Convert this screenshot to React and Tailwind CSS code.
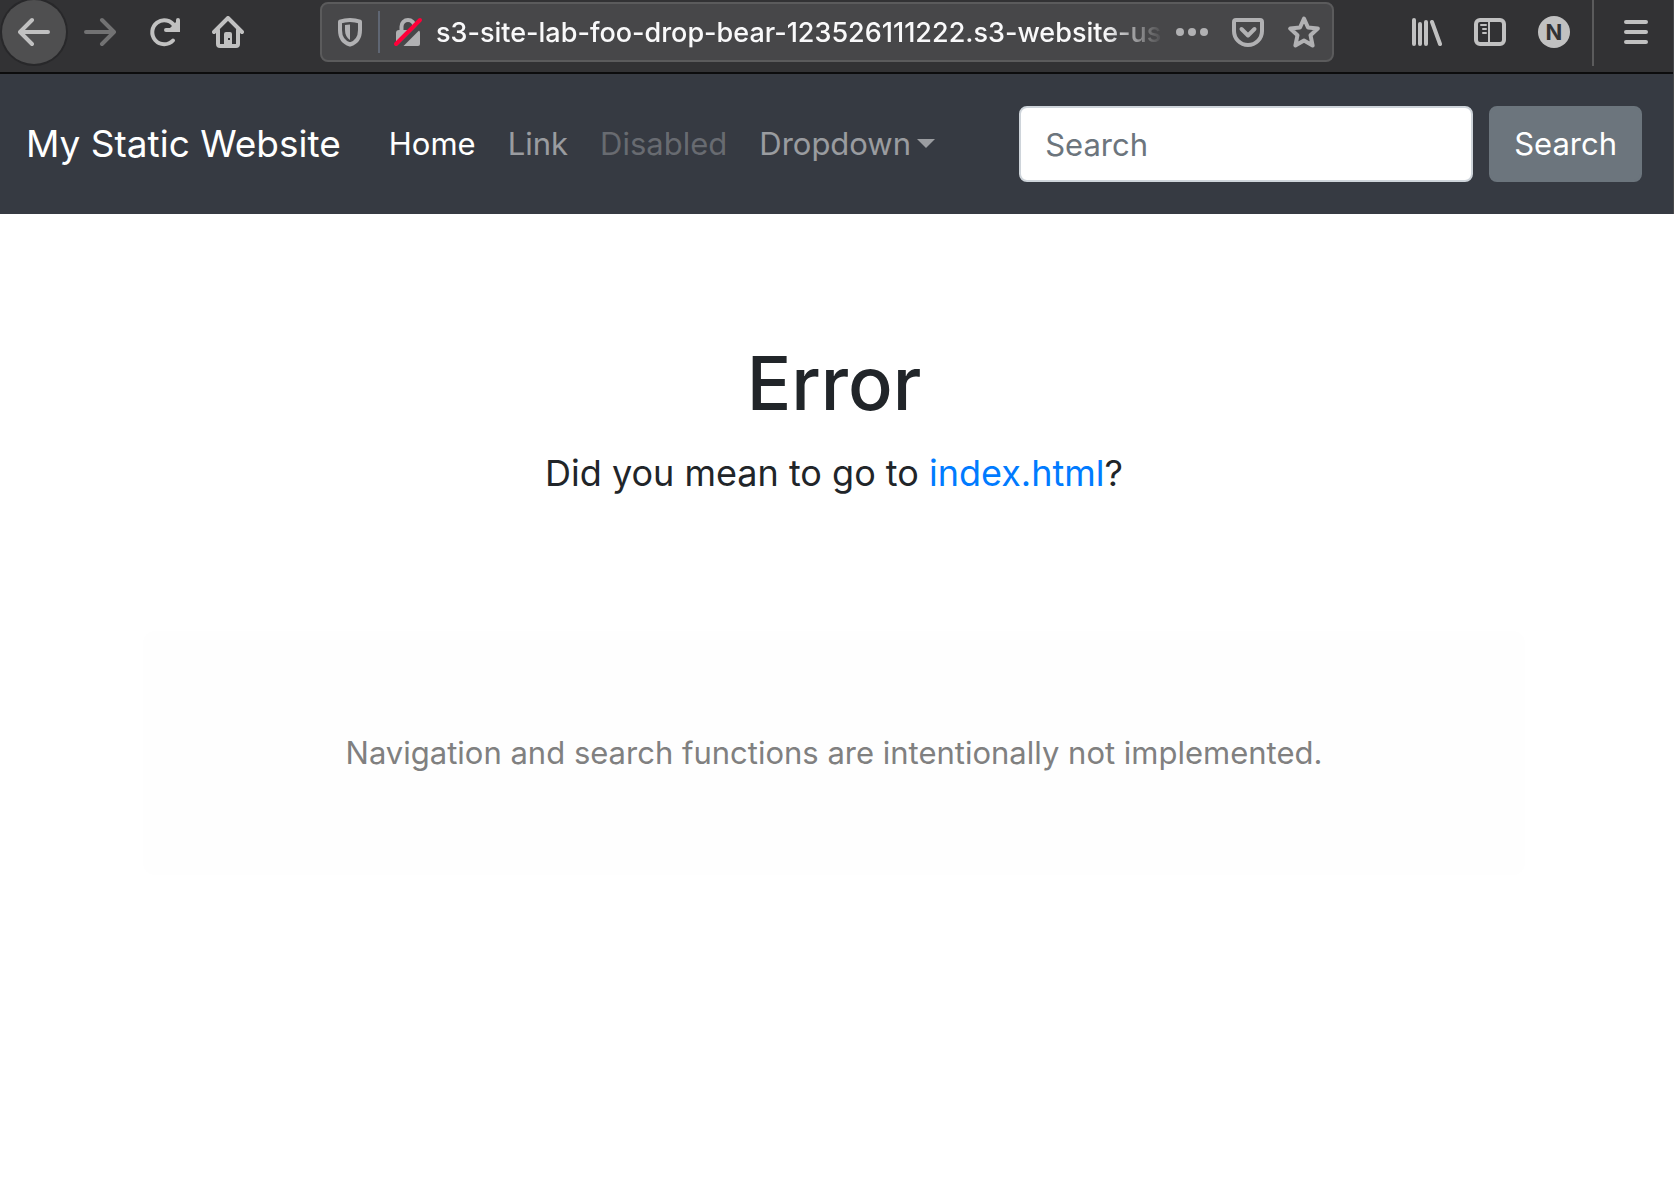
import React from "react";

function Icon({ children, ...rest }) {
  return (
    <svg
      viewBox="0 0 32 32"
      className="size-8 shrink-0"
      fill="none"
      stroke="currentColor"
      strokeWidth="4"
      strokeLinecap="round"
      strokeLinejoin="round"
      aria-hidden="true"
      {...rest}
    >
      {children}
    </svg>
  );
}

function ToolButton({ label, className = "", children, ...rest }) {
  return (
    <button
      type="button"
      aria-label={label}
      className={`flex size-16 shrink-0 items-center justify-center rounded-full ${className}`}
      {...rest}
    >
      {children}
    </button>
  );
}

function BackIcon() {
  return (
    <Icon>
      <path d="M30 16H3M14 4 2 16l12 12" />
    </Icon>
  );
}

function ForwardIcon() {
  return (
    <Icon>
      <path d="M2 16h27M18 4l12 12-12 12" />
    </Icon>
  );
}

function ReloadIcon() {
  return (
    <Icon>
      <path d="M25 24.5A12 12 0 1 1 26.5 10" />
      <path d="M18 14h12V4" strokeLinejoin="miter" />
      <path d="M30 4v10H20z" fill="currentColor" stroke="none" />
    </Icon>
  );
}

function HomeIcon() {
  return (
    <Icon>
      <path d="M2 16 16 2l14 14" />
      <path d="M6 14v14a2 2 0 0 0 2 2h16a2 2 0 0 0 2-2V14" />
      <path
        d="M12 30V18a2 2 0 0 1 2-2h4a2 2 0 0 1 2 2v12zM16 22v2h2v-2z"
        fill="currentColor"
        fillRule="evenodd"
        stroke="none"
      />
    </Icon>
  );
}

function ShieldIcon() {
  return (
    <Icon>
      <path d="M16 4c-3.5 0-7 .6-10 1.7V14c0 7 3.5 12.5 10 14.5C22.5 26.5 26 21 26 14V5.7C23 4.6 19.5 4 16 4z" />
      <path d="M16 8.5c-1.8 0-3.5.2-5 .6V14c0 4.5 1.8 8 5 10z" fill="currentColor" stroke="none" />
    </Icon>
  );
}

function InsecureIcon() {
  return (
    <Icon>
      <path d="M9.5 15v-4.500a6.500 6.500 0 0 1 13 0V15" strokeLinecap="butt" />
      <path d="M7 14h18a3 3 0 0 1 3 3v11a2 2 0 0 1-2 2H6a2 2 0 0 1-2-2V17a3 3 0 0 1 3-3z" fill="currentColor" stroke="none" />
      <path d="M6 32 30 8" stroke="#474749" strokeWidth="5" strokeLinecap="butt" />
      <path d="M4 28 28 4" stroke="#ff0039" strokeWidth="4" />
    </Icon>
  );
}

function DotsIcon() {
  return (
    <Icon fill="currentColor" stroke="none">
      <circle cx="4" cy="16" r="4" />
      <circle cx="16" cy="16" r="4" />
      <circle cx="28" cy="16" r="4" />
    </Icon>
  );
}

function PocketIcon() {
  return (
    <Icon>
      <path d="M4 4h24a2 2 0 0 1 2 2v9a14 14 0 0 1-28 0V6a2 2 0 0 1 2-2z" />
      <path d="m9.5 13 6.5 6.5 6.5-6.5" />
    </Icon>
  );
}

function StarIcon() {
  return (
    <Icon>
      <path d="m16 2.5 4 9 9.8 1-7.3 6.700 2.100 10.300L16 24.600l-8.600 4.900 2.100-10.300L2.200 12.500l9.800-1z" />
    </Icon>
  );
}

function LibraryIcon() {
  return (
    <Icon>
      <path d="M4 4v24M10 8v20M16 6v22M22 6l8 22" />
    </Icon>
  );
}

function SidebarIcon() {
  return (
    <Icon>
      <rect x="2" y="4" width="28" height="24" rx="4" />
      <path d="M15 5v22" strokeWidth="2" strokeLinecap="butt" />
      <path d="M7 9h5M9 13h3M9 17h3" strokeWidth="2" />
    </Icon>
  );
}

function MenuIcon() {
  return (
    <Icon>
      <path d="M6 6h20M6 16h20M6 26h20" />
    </Icon>
  );
}

function BrowserToolbar() {
  return (
    <header className="flex items-start border-b-2 border-[#0c0c0d] bg-[#323234] pr-[5px] pb-1.5 pl-0.5 text-[#c1c1c1]">
      <ToolButton label="Back" className="bg-[#4f4f50] ring-2 ring-[#28282a]">
        <BackIcon />
      </ToolButton>
      <ToolButton label="Forward" className="ml-0.5 text-[#727273]" disabled>
        <ForwardIcon />
      </ToolButton>
      <ToolButton label="Reload">
        <ReloadIcon />
      </ToolButton>
      <ToolButton label="Home">
        <HomeIcon />
      </ToolButton>

      <div className="mx-15 mt-0.5 flex h-15 min-w-0 flex-1 items-center rounded-lg border-2 border-[#5b5b5c] bg-[#474749] px-3 text-[#b1b1b3]">
        <button type="button" aria-label="Tracking protection" className="shrink-0">
          <ShieldIcon />
        </button>
        <span className="mx-3 h-[42px] w-0.5 shrink-0 bg-[#5f6673]" />
        <button type="button" aria-label="Connection is not secure" className="shrink-0">
          <InsecureIcon />
        </button>
        <input
          type="text"
          aria-label="Address"
          readOnly
          value="s3-site-lab-foo-drop-bear-123526111222.s3-website-us"
          className="ml-3 min-w-0 flex-1 bg-transparent pt-0.5 text-[27px] font-medium text-[#f9f9fa] outline-none [mask-image:linear-gradient(to_left,transparent,black_60px)]"
        />
        <span className="ml-3 flex shrink-0 items-center gap-6">
          <button type="button" aria-label="Page actions">
            <DotsIcon />
          </button>
          <button type="button" aria-label="Save to Pocket">
            <PocketIcon />
          </button>
          <button type="button" aria-label="Bookmark this page">
            <StarIcon />
          </button>
        </span>
      </div>

      <ToolButton label="Library">
        <LibraryIcon />
      </ToolButton>
      <ToolButton label="Sidebars">
        <SidebarIcon />
      </ToolButton>
      <ToolButton label="Account">
        <span className="flex size-8 items-center justify-center rounded-full bg-[#c1c1c1] text-[22px] leading-8 font-bold text-[#323234]">
          N
        </span>
      </ToolButton>
      <span className="mr-2.5 ml-1.5 h-[66px] w-0.5 shrink-0 bg-[#5b5b5c]" />
      <ToolButton label="Open menu">
        <MenuIcon />
      </ToolButton>
    </header>
  );
}

function Navbar() {
  return (
    <nav className="flex items-center bg-[#363a42] py-8 pr-[31px] pl-[26px] text-[31px] leading-12">
      <a href="#" className="mr-8 text-[37px] whitespace-nowrap text-white">
        My Static Website
      </a>
      <ul className="mr-auto flex">
        <li>
          <a href="#" aria-current="page" className="px-4 text-white">
            Home
          </a>
        </li>
        <li>
          <a href="#" className="px-4 text-white/50">
            Link
          </a>
        </li>
        <li>
          <a href="#" aria-disabled="true" className="px-4 text-white/25">
            Disabled
          </a>
        </li>
        <li>
          <button type="button" aria-haspopup="true" className="flex items-center gap-1.5 px-4 text-white/50">
            Dropdown
            <svg viewBox="0 0 18 10" className="h-2.5 w-4.5" fill="currentColor" aria-hidden="true">
              <path d="M0 0h18L9 9z" />
            </svg>
          </button>
        </li>
      </ul>
      <form className="flex gap-4" onSubmit={(e) => e.preventDefault()}>
        <input
          type="text"
          placeholder="Search"
          aria-label="Search"
          className="h-19 w-[454px] min-w-0 rounded-lg border-2 border-[#ced4da] bg-white px-6 text-[#495057] placeholder:text-[#6c757d]"
        />
        <button type="submit" className="h-19 rounded-lg border-2 border-[#6c757d] bg-[#6c757d] px-[23px] text-white">
          Search
        </button>
      </form>
    </nav>
  );
}

export default function App() {
  return (
    <div className="min-h-screen bg-white font-['Inter',sans-serif]">
      <div className="border-r border-[#48494b]">
        <BrowserToolbar />
        <Navbar />
      </div>
      <main className="pt-[121px] pr-1.5 text-center text-[#212529]">
        <h1 className="text-[74px] leading-24 font-medium">Error</h1>
        <p className="mt-3 text-4xl leading-15">
          Did you mean to go to{" "}
          <a href="index.html" className="text-[#007bff]">
            index.html
          </a>
          ?
        </p>
        <section className="mx-auto mt-32 max-w-[1382px] rounded-xl bg-[#fefefe] px-8 py-[98px]">
          <p className="text-[31px] leading-12 text-[#808080]">
            Navigation and search functions are intentionally not implemented.
          </p>
        </section>
      </main>
    </div>
  );
}
